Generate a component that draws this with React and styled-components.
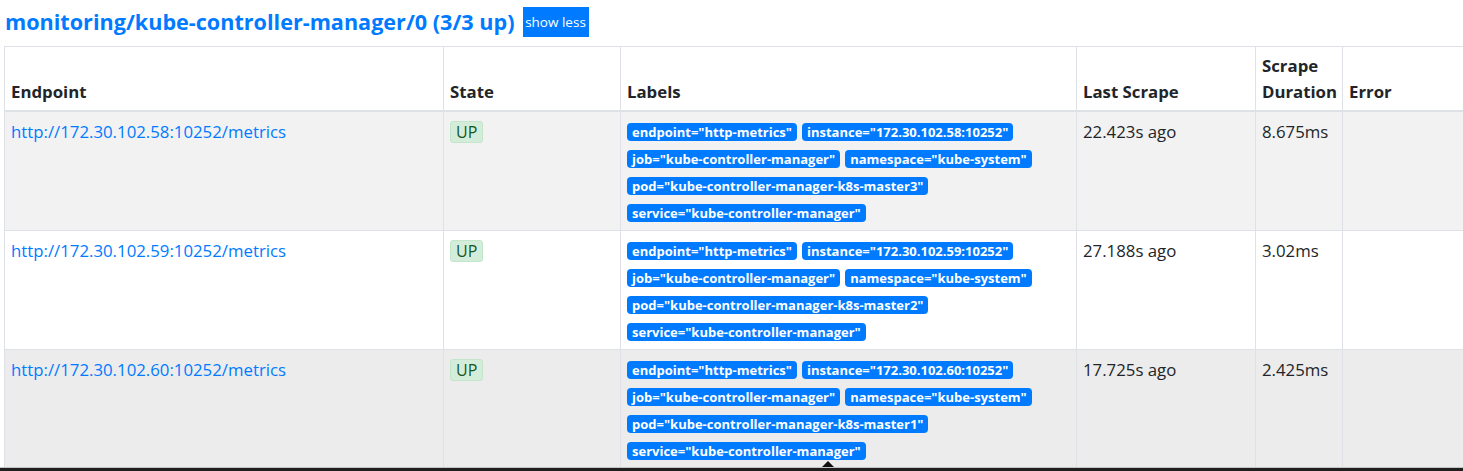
import React from "react";
import styled, { createGlobalStyle } from "styled-components";

const Global = createGlobalStyle`
  html, body { margin: 0; padding: 0; overflow: hidden; background: #fff; }
  body { font-family: "Open Sans", "Noto Sans", sans-serif; color: #212529; }
`;

const Page = styled.div`
  padding: 0 0 0 4px;
`;

const TitleBar = styled.div`
  display: flex;
  align-items: center;
  gap: 8px;
  padding-top: 7px;
  margin-bottom: 9px;
  padding-left: 1px;
`;

const Title = styled.h2`
  margin: 0;
  font-size: 21.6px;
  line-height: 30px;
  font-weight: 700;
  color: #007bff;
`;

const ToggleButton = styled.button`
  height: 30px;
  width: 66px;
  border: none;
  border-radius: 0;
  background: #007bff;
  color: #fff;
  font-family: inherit;
  font-size: 13.5px;
  padding: 0;
`;

const Table = styled.table`
  border-collapse: collapse;
  table-layout: fixed;
  width: 1700px;
`;

const Th = styled.th`
  border: 1px solid #dee2e6;
  border-bottom: 2px solid #dee2e6;
  padding: 6px 6px 4px;
  text-align: left;
  vertical-align: bottom;
  font-size: 16.8px;
  line-height: 26.4px;
  font-weight: 700;
  color: #212529;
`;

const Row = styled.tr`
  background: ${(p) => p.$bg};
`;

const Td = styled.td`
  border: 1px solid #dee2e6;
  padding: 7px 6px 3px;
  vertical-align: top;
  font-size: 16.8px;
  line-height: 26.4px;
  color: #212529;
`;

const EndpointLink = styled.a`
  color: #007bff;
  text-decoration: none;
`;

const StateBadge = styled.span`
  display: inline-block;
  margin-top: 1px;
  height: 22px;
  line-height: 20px;
  box-sizing: border-box;
  padding: 0 5px;
  background: #d4edda;
  border: 1px solid #c3e6cb;
  border-radius: 3px;
  color: #155724;
  font-size: 16px;
`;

const Labels = styled.div`
  display: flex;
  flex-wrap: wrap;
  column-gap: 5px;
`;

const LabelBreak = styled.div`
  flex-basis: 100%;
  height: 0;
`;

const LabelBadge = styled.span`
  display: inline-block;
  margin: 4.5px 0;
  height: 18px;
  line-height: 18px;
  padding: 0 5px;
  border-radius: 4px;
  background: #007bff;
  color: #fff;
  font-size: 13px;
  font-weight: 700;
  white-space: nowrap;
`;

const BottomBar = styled.div`
  position: fixed;
  left: 0;
  right: 0;
  bottom: 0;
  height: 3px;
  background: #1f1f1f;
  border-top: 1px solid #c4c4c4;
`;

const Caret = styled.div`
  position: fixed;
  left: 822px;
  bottom: 4px;
  width: 0;
  height: 0;
  border-left: 6px solid transparent;
  border-right: 6px solid transparent;
  border-bottom: 6px solid #111;
`;

const targets = [
  { ip: "172.30.102.58", master: "k8s-master3", last: "22.423s ago", dur: "8.675ms", bg: "#f2f2f2" },
  { ip: "172.30.102.59", master: "k8s-master2", last: "27.188s ago", dur: "3.02ms", bg: "#ffffff" },
  { ip: "172.30.102.60", master: "k8s-master1", last: "17.725s ago", dur: "2.425ms", bg: "#ececec" },
];

export default function App() {
  return (
    <Page>
      <Global />
      <TitleBar>
        <Title>monitoring/kube-controller-manager/0 (3/3 up)</Title>
        <ToggleButton>show less</ToggleButton>
      </TitleBar>
      <Table>
        <colgroup>
          <col style={{ width: 439 }} />
          <col style={{ width: 177 }} />
          <col style={{ width: 456 }} />
          <col style={{ width: 179 }} />
          <col style={{ width: 87 }} />
          <col />
        </colgroup>
        <thead>
          <tr>
            <Th>Endpoint</Th>
            <Th>State</Th>
            <Th>Labels</Th>
            <Th>Last Scrape</Th>
            <Th>Scrape Duration</Th>
            <Th>Error</Th>
          </tr>
        </thead>
        <tbody>
          {targets.map((t) => (
            <Row key={t.ip} $bg={t.bg}>
              <Td>
                <EndpointLink href="#">{`http://${t.ip}:10252/metrics`}</EndpointLink>
              </Td>
              <Td>
                <StateBadge>UP</StateBadge>
              </Td>
              <Td>
                <Labels>
                  <LabelBadge>endpoint="http-metrics"</LabelBadge>
                  <LabelBadge>{`instance="${t.ip}:10252"`}</LabelBadge>
                  <LabelBreak />
                  <LabelBadge>job="kube-controller-manager"</LabelBadge>
                  <LabelBadge>namespace="kube-system"</LabelBadge>
                  <LabelBreak />
                  <LabelBadge>{`pod="kube-controller-manager-${t.master}"`}</LabelBadge>
                  <LabelBreak />
                  <LabelBadge>service="kube-controller-manager"</LabelBadge>
                </Labels>
              </Td>
              <Td>{t.last}</Td>
              <Td>{t.dur}</Td>
              <Td />
            </Row>
          ))}
        </tbody>
      </Table>
      <BottomBar />
      <Caret />
    </Page>
  );
}
